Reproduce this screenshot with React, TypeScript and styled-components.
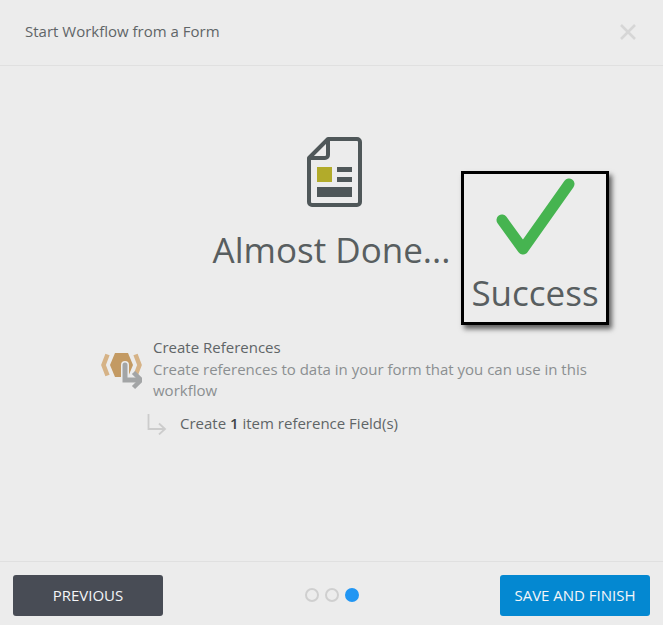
import styled, { createGlobalStyle } from 'styled-components'

const Global = createGlobalStyle`
  html, body {
    margin: 0;
    padding: 0;
    background: #ececec;
  }
`

const Modal = styled.div`
  position: relative;
  display: flex;
  flex-direction: column;
  width: 663px;
  height: 625px;
  background: #ececec;
  font-family: 'Open Sans', sans-serif;
  color: #4f5557;
  overflow: hidden;
`

const Header = styled.header`
  display: flex;
  align-items: center;
  justify-content: space-between;
  box-sizing: border-box;
  height: 66px;
  padding: 0 26px 4px 25px;
  border-bottom: 1px solid #e0e0e0;
`

const Title = styled.h1`
  margin: 0;
  font-size: 15px;
  font-weight: 400;
  color: #5f6567;
`

const CloseIcon = styled.svg`
  display: block;
  width: 18px;
  height: 18px;
  margin-top: 2px;
`

const Body = styled.main`
  flex: 1;
  display: flex;
  flex-direction: column;
  align-items: center;
  padding-top: 71px;
`

const DocIcon = styled.svg`
  display: block;
  width: 55px;
  height: 70px;
  margin-left: 6px;
`

const Heading = styled.h2`
  margin: 20px 0 0;
  font-size: 35px;
  line-height: 46px;
  font-weight: 400;
  color: #585e60;
`

const Steps = styled.section`
  align-self: flex-start;
  margin: 64px 0 0 100px;
  width: 500px;
`

const StepRow = styled.div`
  display: flex;
  gap: 11px;
`

const RefIcon = styled.svg`
  flex: none;
  width: 42px;
  height: 38px;
  margin-top: 15px;
`

const StepText = styled.div`
  width: 440px;
  font-size: 15px;
  line-height: 21.5px;
`

const StepTitle = styled.div`
  color: #5f6567;
`

const StepDesc = styled.div`
  color: #8b8f91;
`

const SubRow = styled.div`
  display: flex;
  align-items: center;
  margin: 11px 0 0 47px;
  font-size: 15px;
  line-height: 21.5px;
  color: #5f6567;
`

const ElbowIcon = styled.svg`
  flex: none;
  width: 20px;
  height: 22px;
  margin-right: 13px;
`

const Count = styled.b`
  font-weight: 600;
  color: #3f4446;
`

const Footer = styled.footer`
  display: flex;
  align-items: center;
  justify-content: space-between;
  box-sizing: border-box;
  height: 64px;
  padding: 4px 13px 0;
  border-top: 1px solid #e0e0e0;
`

const Button = styled.button<{ $primary?: boolean }>`
  box-sizing: border-box;
  width: 150px;
  height: 41px;
  padding: 0 0 2px;
  border: 0;
  border-radius: 3px;
  background: ${p => (p.$primary ? '#0488d1' : '#484c55')};
  color: #f4f6f8;
  font-family: inherit;
  font-size: 15px;
  font-weight: 400;
`

const Dots = styled.div`
  display: flex;
  gap: 6px;
  margin: 0 0 1px 1px;
`

const Dot = styled.span<{ $active?: boolean }>`
  box-sizing: border-box;
  width: 14px;
  height: 14px;
  border-radius: 50%;
  border: 2px solid ${p => (p.$active ? '#2196f3' : '#cfcfcf')};
  background: ${p => (p.$active ? '#2196f3' : 'transparent')};
`

const SuccessBadge = styled.div`
  position: absolute;
  left: 461px;
  top: 171px;
  box-sizing: border-box;
  width: 148px;
  height: 154px;
  display: flex;
  flex-direction: column;
  align-items: center;
  border: 3px solid #000;
  background: #ececec;
  box-shadow: 3px 4px 5px rgba(0, 0, 0, 0.6);
`

const CheckIcon = styled.svg`
  display: block;
  width: 84px;
  height: 82px;
  margin-top: 3px;
`

const SuccessLabel = styled.div`
  font-size: 35px;
  line-height: 46px;
  margin-top: 11px;
  color: #585e60;
`

export default function App() {
  return (
    <Modal>
      <Global />
      <Header>
        <Title>Start Workflow from a Form</Title>
        <CloseIcon viewBox="0 0 18 18">
          <path d="M2 2l14 14M16 2L2 16" stroke="#d6d6d6" strokeWidth="2.6" fill="none" />
        </CloseIcon>
      </Header>
      <Body>
        <DocIcon viewBox="0 0 55 70">
          <path
            d="M21 2H50a3 3 0 0 1 3 3V65a3 3 0 0 1-3 3H5a3 3 0 0 1-3-3V21Z"
            fill="none"
            stroke="#4f5759"
            strokeWidth="4"
            strokeLinejoin="round"
          />
          <path d="M21 2V18a3 3 0 0 1-3 3H2" fill="none" stroke="#4f5759" strokeWidth="4" strokeLinejoin="round" />
          <rect x="10" y="30" width="15" height="15" fill="#b2ab2a" />
          <rect x="30" y="30" width="15" height="5" fill="#4f5759" />
          <rect x="30" y="40" width="15" height="5" fill="#4f5759" />
          <rect x="10" y="50" width="35" height="10" fill="#4f5759" />
        </DocIcon>
        <Heading>Almost Done...</Heading>
        <Steps>
          <StepRow>
            <RefIcon viewBox="0 0 42 38">
              <path d="M15 1h13l5 12-5 12H15l-5-12Z" fill="#c39a63" />
              <path d="M7.500 2.500 3.500 13l4 10.500" fill="none" stroke="#d6b387" strokeWidth="4.500" />
              <path d="M35.500 2.500l4 10.500-4 10.500" fill="none" stroke="#d6b387" strokeWidth="4.500" />
              <path d="M25 13V28H39" fill="none" stroke="#ececec" strokeWidth="8" strokeLinecap="round" />
              <path d="M25 13V28H39" fill="none" stroke="#a3a5a6" strokeWidth="5" strokeLinecap="round" />
              <path d="M33.500 20.500l7.500 7.500-7.500 7.500" fill="none" stroke="#a3a5a6" strokeWidth="4.500" />
            </RefIcon>
            <StepText>
              <StepTitle>Create References</StepTitle>
              <StepDesc>Create references to data in your form that you can use in this workflow</StepDesc>
            </StepText>
          </StepRow>
          <SubRow>
            <ElbowIcon viewBox="0 0 20 22">
              <path d="M1.500 1v15H18M12 10.500l6 5.500-6 5.500" fill="none" stroke="#cccccc" strokeWidth="1.800" />
            </ElbowIcon>
            <span>
              Create <Count>1</Count> item reference Field(s)
            </span>
          </SubRow>
        </Steps>
      </Body>
      <Footer>
        <Button>PREVIOUS</Button>
        <Dots>
          <Dot />
          <Dot />
          <Dot $active />
        </Dots>
        <Button $primary>SAVE AND FINISH</Button>
      </Footer>
      <SuccessBadge>
        <CheckIcon viewBox="0 0 84 82">
          <path
            d="M9 43 L30 72 L76 7"
            fill="none"
            stroke="#46b450"
            strokeWidth="11"
            strokeLinecap="round"
            strokeLinejoin="round"
          />
        </CheckIcon>
        <SuccessLabel>Success</SuccessLabel>
      </SuccessBadge>
    </Modal>
  )
}
